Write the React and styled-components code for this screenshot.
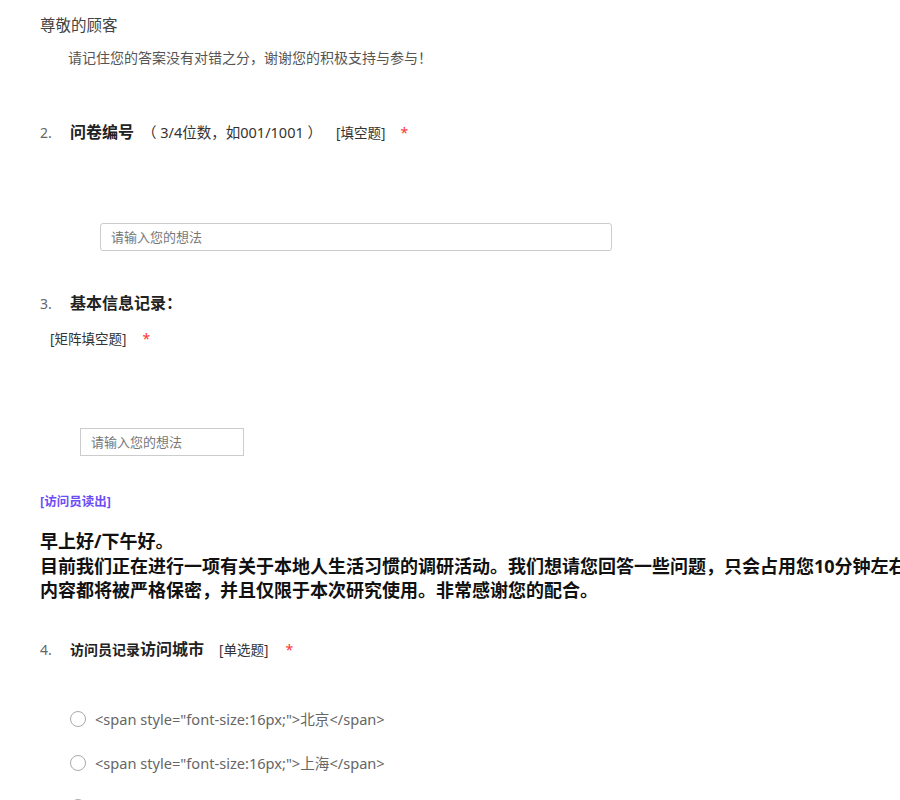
import styled, { createGlobalStyle } from "styled-components";

const GlobalStyle = createGlobalStyle`
  html, body {
    margin: 0;
    padding: 0;
    background: #fff;
    overflow-x: hidden;
  }
  body {
    font-family: "Noto Sans", "Noto Sans CJK SC", sans-serif;
    color: #333;
  }
`;

const Page = styled.div`
  padding: 0 0 0 40px;
  width: 1200px;
`;

const Greeting = styled.div`
  margin-top: 15px;
  font-size: 15.5px;
  line-height: 20px;
  color: #444;
`;

const Intro = styled.div`
  margin-top: 13px;
  padding-left: 28px;
  font-size: 14px;
  line-height: 20px;
  color: #555;
`;

const QuestionHead = styled.div`
  display: flex;
  align-items: baseline;
  margin-top: ${(p) => p.$top}px;
  line-height: 24px;
  white-space: nowrap;
`;

const Num = styled.span`
  width: 30px;
  font-size: 14px;
  color: #666;
`;

const Title = styled.span`
  font-size: ${(p) => p.$size || 16}px;
  font-weight: bold;
  color: #222;
`;

const Hint = styled.span`
  margin-left: 8px;
  font-size: 14.5px;
  color: #333;
`;

const Tag = styled.span`
  margin-left: ${(p) => p.$gap || 12}px;
  font-size: 13.5px;
  color: #333;
`;

const Star = styled.span`
  margin-left: ${(p) => p.$gap || 14}px;
  font-size: 14px;
  color: #f33;
`;

const SubTag = styled.div`
  margin-top: 12px;
  padding-left: 10px;
  line-height: 20px;
  white-space: nowrap;
  ${Tag} {
    margin-left: 0;
  }
`;

const TextInput = styled.input`
  display: block;
  box-sizing: border-box;
  margin-top: ${(p) => p.$top}px;
  margin-left: ${(p) => p.$left}px;
  width: ${(p) => p.$width}px;
  height: 28px;
  padding: 0 10px;
  border: 1px solid #ccc;
  border-radius: ${(p) => (p.$round ? 3 : 0)}px;
  font-family: inherit;
  font-size: 13px;
  color: #333;
  outline: none;
  &::placeholder {
    color: #777;
  }
`;

const ReadOut = styled.div`
  margin-top: 36px;
  font-size: 12.5px;
  line-height: 20px;
  font-weight: bold;
  color: #6b4df5;
`;

const Script = styled.div`
  margin-top: 17px;
  font-size: 18px;
  line-height: 24.5px;
  font-weight: bold;
  color: #111;
  white-space: nowrap;
`;

const Options = styled.div`
  display: flex;
  flex-direction: column;
  gap: 20px;
  margin-top: 45px;
  padding-left: 30px;
`;

const Option = styled.label`
  display: flex;
  align-items: center;
  gap: 9px;
  line-height: 24px;
  font-size: 14.6px;
  color: #666;
  white-space: nowrap;
`;

const Radio = styled.span`
  box-sizing: border-box;
  width: 16px;
  height: 16px;
  border: 1px solid #aaa;
  border-radius: 50%;
  background: #fff;
`;

const cities = ["北京", "上海", "广州"];

export default function App() {
  return (
    <>
      <GlobalStyle />
      <Page>
        <Greeting>尊敬的顾客</Greeting>
        <Intro>请记住您的答案没有对错之分，谢谢您的积极支持与参与！</Intro>

        <QuestionHead $top={52}>
          <Num>2.</Num>
          <Title>问卷编号</Title>
          <Hint>（ 3/4位数，如001/1001 ）</Hint>
          <Tag $gap={14}>[填空题]</Tag>
          <Star $gap={15}>*</Star>
        </QuestionHead>
        <TextInput $top={78} $left={60} $width={512} $round placeholder="请输入您的想法" />

        <QuestionHead $top={40}>
          <Num>3.</Num>
          <Title>基本信息记录：</Title>
        </QuestionHead>
        <SubTag>
          <Tag>[矩阵填空题]</Tag>
          <Star $gap={16}>*</Star>
        </SubTag>
        <TextInput $top={79} $left={40} $width={164} placeholder="请输入您的想法" />

        <ReadOut>[访问员读出]</ReadOut>
        <Script>
          早上好/下午好。
          <br />
          目前我们正在进行一项有关于本地人生活习惯的调研活动。我们想请您回答一些问题，只会占用您10分钟左右的时间。您的所有回答
          <br />
          内容都将被严格保密，并且仅限于本次研究使用。非常感谢您的配合。
        </Script>

        <QuestionHead $top={34.5}>
          <Num>4.</Num>
          <Title $size={14}>访问员记录</Title>
          <Title>访问城市</Title>
          <Tag $gap={15}>[单选题]</Tag>
          <Star $gap={17}>*</Star>
        </QuestionHead>
        <Options>
          {cities.map((c) => (
            <Option key={c}>
              <Radio />
              {`<span style="font-size:16px;">${c}</span>`}
            </Option>
          ))}
        </Options>
      </Page>
    </>
  );
}
